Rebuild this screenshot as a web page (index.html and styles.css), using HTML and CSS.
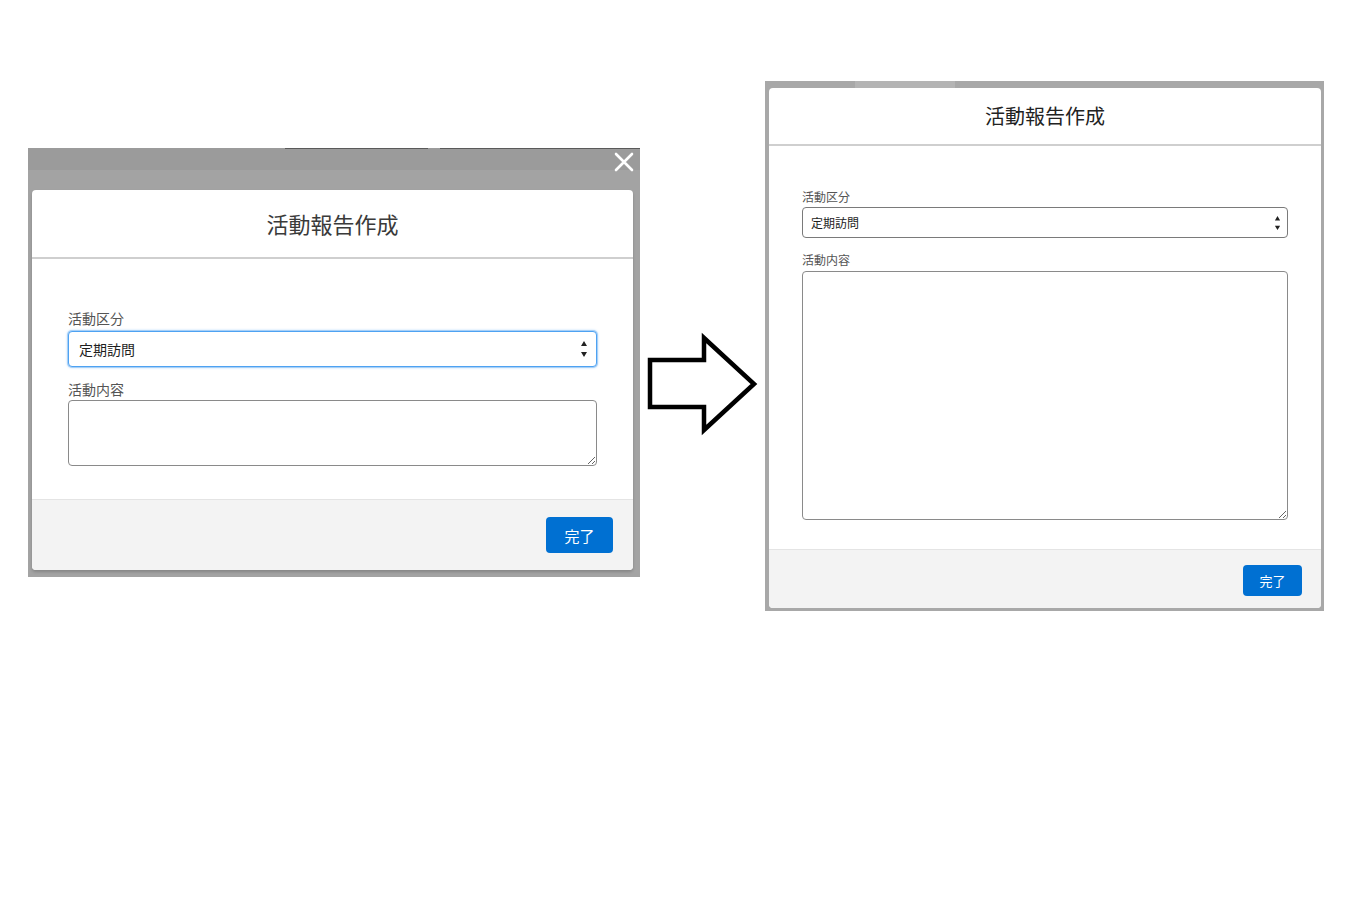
FILE: index.html
```html
<!DOCTYPE html>
<html lang="ja">
<head>
<meta charset="utf-8">
<title>活動報告作成</title>
<link rel="stylesheet" href="styles.css">
</head>
<body>
<div class="stage">
  <div class="shot shot-left">
    <svg class="close-x" viewBox="0 0 20 20" width="20" height="20" aria-hidden="true">
      <path d="M2 2 L18 18 M18 2 L2 18" stroke="#ffffff" stroke-width="2.6" stroke-linecap="round" fill="none"/>
    </svg>
    <div class="modal modal-big">
      <div class="m-header"><h2 class="m-title">活動報告作成</h2></div>
      <div class="m-body">
        <div class="m-label">活動区分</div>
        <div class="m-select focused">
          <span class="m-select-text">定期訪問</span>
          <svg class="spin" viewBox="0 0 8 18" aria-hidden="true"><path d="M4 1 L7 6 L1 6 Z M1 12 L7 12 L4 17 Z" fill="#222"/></svg>
        </div>
        <div class="m-label label2">活動内容</div>
        <textarea class="m-textarea"></textarea>
      </div>
      <div class="m-footer"><button class="m-btn">完了</button></div>
    </div>
  </div>

  <svg class="arrow" viewBox="0 0 117 104" width="117" height="104" aria-hidden="true">
    <polygon points="5,28 59,28 59,6 109,52 59,98 59,75 5,75" fill="#ffffff" stroke="#000000" stroke-width="4.5" stroke-linejoin="miter"/>
  </svg>

  <div class="shot shot-right">
    <div class="modal modal-small">
      <div class="m-header"><h2 class="m-title">活動報告作成</h2></div>
      <div class="m-body">
        <div class="m-label">活動区分</div>
        <div class="m-select">
          <span class="m-select-text">定期訪問</span>
          <svg class="spin" viewBox="0 0 8 18" aria-hidden="true"><path d="M4 1 L7 6 L1 6 Z M1 12 L7 12 L4 17 Z" fill="#222"/></svg>
        </div>
        <div class="m-label label2">活動内容</div>
        <textarea class="m-textarea"></textarea>
      </div>
      <div class="m-footer"><button class="m-btn">完了</button></div>
    </div>
  </div>
</div>
</body>
</html>
```
FILE: styles.css
```css
html, body {
  margin: 0;
  padding: 0;
  background: #ffffff;
}
body {
  font-family: "Noto Sans CJK JP", "Noto Sans", sans-serif;
  width: 1353px;
  height: 902px;
  overflow: hidden;
}
.stage {
  display: flex;
  align-items: flex-start;
  padding-left: 28px;
}
.shot {
  box-sizing: border-box;
  position: relative;
  flex: none;
}
.shot-left {
  width: 612px;
  height: 429px;
  margin-top: 148px;
  padding: 42px 7px 7px 4px;
  background:
    linear-gradient(to right, transparent 0, transparent 257px, #5a5a5a 257px, #5a5a5a 400px, transparent 400px, transparent 412px, #5a5a5a 412px) top left / 100% 1px no-repeat,
    linear-gradient(to bottom, #9b9b9b 0, #9b9b9b 22px, #a3a3a3 22px);
}
.close-x {
  position: absolute;
  left: 586px;
  top: 4px;
}
.arrow {
  flex: none;
  margin-top: 332px;
  margin-left: 5px;
  display: block;
}
.shot-right {
  width: 559px;
  height: 530px;
  margin-top: 81px;
  margin-left: 3px;
  padding: 7px 3px 3px 4px;
  background:
    linear-gradient(to right, transparent 0, transparent 90px, #b4b4b4 90px, #b4b4b4 190px, transparent 190px) top left / 100% 7px no-repeat,
    #a8a8a8;
}
.modal {
  box-sizing: border-box;
  display: flex;
  flex-direction: column;
  background: #ffffff;
  border-radius: 4px;
  overflow: hidden;
  height: 100%;
}
.modal-big {
  box-shadow: 0 2px 3px rgba(0, 0, 0, 0.18);
}
.m-header {
  box-sizing: border-box;
  display: flex;
  align-items: center;
  justify-content: center;
  border-bottom: 2px solid #cfcfcf;
  flex: none;
}
.m-title {
  margin: 0;
  font-weight: 400;
}
.m-body {
  box-sizing: border-box;
  flex: 1;
  display: flex;
  flex-direction: column;
}
.m-label {
  color: #555555;
}
.m-select {
  box-sizing: border-box;
  display: flex;
  align-items: center;
  justify-content: space-between;
  border: 1px solid #7a7a7a;
  border-radius: 4px;
  background: #ffffff;
  color: #1e1e1e;
}
.m-select.focused {
  border-color: #4ea2f2;
  box-shadow: 0 0 0 1px #a8d0f7, 0 0 3px #6fb3f5;
}
.spin {
  display: block;
}
.m-textarea {
  box-sizing: border-box;
  display: block;
  width: 100%;
  border: 1px solid #8a8a8a;
  border-radius: 4px;
  margin: 0;
  padding: 0;
  resize: vertical;
  background: #ffffff;
  font-family: inherit;
}
.m-footer {
  box-sizing: border-box;
  flex: none;
  background: #f3f3f3;
  border-top: 1px solid #e4e4e4;
  display: flex;
  justify-content: flex-end;
  align-items: flex-start;
}
.m-btn {
  box-sizing: border-box;
  border: none;
  background: #0070d2;
  color: #ffffff;
  border-radius: 4px;
  font-family: inherit;
  padding: 0;
  cursor: pointer;
}

/* large (left) */
.modal-big .m-header { height: 69px; padding-bottom: 2px; }
.modal-big .m-title { font-size: 22px; color: #3a3a3a; }
.modal-big .m-body { padding: 49px 36px 33px 36px; }
.modal-big .m-label { font-size: 14px; line-height: 20px; margin-bottom: 3px; }
.modal-big .label2 { margin-bottom: 1px; }
.modal-big .m-select { height: 36px; margin-bottom: 12px; padding: 0 8px 0 10px; font-size: 14px; }
.modal-big .spin { width: 8px; height: 18px; }
.modal-big .m-textarea { height: 66px; }
.modal-big .m-footer { height: 71px; padding: 17px 20px 0 0; }
.modal-big .m-btn { width: 67px; height: 36px; font-size: 15px; }

/* small (right) */
.modal-small .m-header { height: 58px; padding-bottom: 1px; }
.modal-small .m-title { font-size: 20px; color: #222222; }
.modal-small .m-body { padding: 43px 33px 29px 33px; }
.modal-small .m-label { font-size: 12px; line-height: 16px; margin-bottom: 2px; }
.modal-small .label2 { margin-bottom: 3px; }
.modal-small .m-select { height: 31px; margin-bottom: 14px; padding: 0 6px 0 8px; font-size: 12px; }
.modal-small .spin { width: 7px; height: 16px; }
.modal-small .m-textarea { height: 249px; }
.modal-small .m-footer { height: 59px; padding: 15px 19px 0 0; }
.modal-small .m-btn { width: 59px; height: 31px; font-size: 13px; }
```
